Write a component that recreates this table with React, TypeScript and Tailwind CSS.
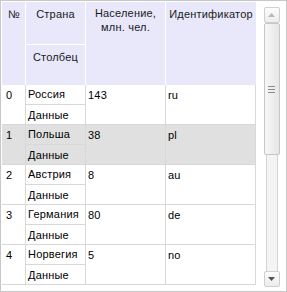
const rows = [
  { n: "0", country: "Россия", pop: "143", id: "ru" },
  { n: "1", country: "Польша", pop: "38", id: "pl", selected: true },
  { n: "2", country: "Австрия", pop: "8", id: "au" },
  { n: "3", country: "Германия", pop: "80", id: "de" },
  { n: "4", country: "Норвегия", pop: "5", id: "no" },
];

function ScrollBar() {
  return (
    <div className="flex flex-col w-[16px] mt-[5px] h-[280px]">
      <div className="h-[16px] border border-[#cfcfcf] rounded-[2px] bg-gradient-to-b from-[#fdfdfd] to-[#ececec] flex items-center justify-center">
        <svg width="7" height="4" viewBox="0 0 7 4"><path d="M0 4 L3.5 0 L7 4 Z" fill="#b8b8b8" /></svg>
      </div>
      <div className="h-[132px] border border-[#c6c6c6] rounded-[2px] bg-gradient-to-r from-[#f7f7f7] to-[#e6e6e6] flex flex-col items-center pt-[62px] gap-[2px]">
        <div className="w-[7px] h-px bg-[#8a8a8a]" />
        <div className="w-[7px] h-px bg-[#8a8a8a]" />
        <div className="w-[7px] h-px bg-[#8a8a8a]" />
      </div>
      <div className="flex-1 mx-[2px] border-x border-[#d4d4d4] bg-[#f4f4f4]" />
      <div className="h-[16px] border border-[#cfcfcf] rounded-[2px] bg-gradient-to-b from-[#fdfdfd] to-[#ececec] flex items-center justify-center">
        <svg width="7" height="4" viewBox="0 0 7 4"><path d="M0 0 L7 0 L3.5 4 Z" fill="#555" /></svg>
      </div>
    </div>
  );
}

export default function App() {
  return (
    <div className="w-[287px] h-[292px] bg-white border border-[#c8c8c8] p-px flex text-[11px] tracking-[0.2px] text-black" style={{ fontFamily: '"Liberation Sans", Arial, sans-serif' }}>
      <div className="w-[254px] flex flex-col">
        <div className="flex h-[83px] bg-[#e8e8fa] text-[#1a1a1a]">
          <div className="w-[24px] border-r border-white pl-[6px] pt-[4px]">№</div>
          <div className="w-[60px] border-r border-white flex flex-col">
            <div className="h-[43px] border-b border-white text-center pt-[4px]">Страна</div>
            <div className="flex-1 text-center pt-[4px]">Столбец</div>
          </div>
          <div className="w-[80px] border-r border-white text-center pt-[4px] leading-[14px]">
            Население,<br />млн. чел.
          </div>
          <div className="w-[90px] text-center pt-[4px]">Идентификатор</div>
        </div>
        {rows.map((r) => (
          <div key={r.n} className={`flex h-[40px] border-b border-[#d8d8d8] ${r.selected ? "bg-[#e0e0e0]" : ""}`}>
            <div className="w-[24px] border-r border-[#d8d8d8] pl-[4px] leading-[20px]">{r.n}</div>
            <div className="w-[60px] border-r border-[#d8d8d8] flex flex-col">
              <div className="h-[20px] border-b border-[#d8d8d8] pl-[2px] leading-[19px]">{r.country}</div>
              <div className="flex-1 pl-[2px] leading-[20px]">Данные</div>
            </div>
            <div className="w-[80px] border-r border-[#d8d8d8] pl-[2px] leading-[20px]">{r.pop}</div>
            <div className="w-[90px] border-r border-[#d8d8d8] pl-[2px] leading-[20px]">{r.id}</div>
          </div>
        ))}
      </div>
      <div className="flex-1 flex justify-center pl-[2px]">
        <ScrollBar />
      </div>
    </div>
  );
}
